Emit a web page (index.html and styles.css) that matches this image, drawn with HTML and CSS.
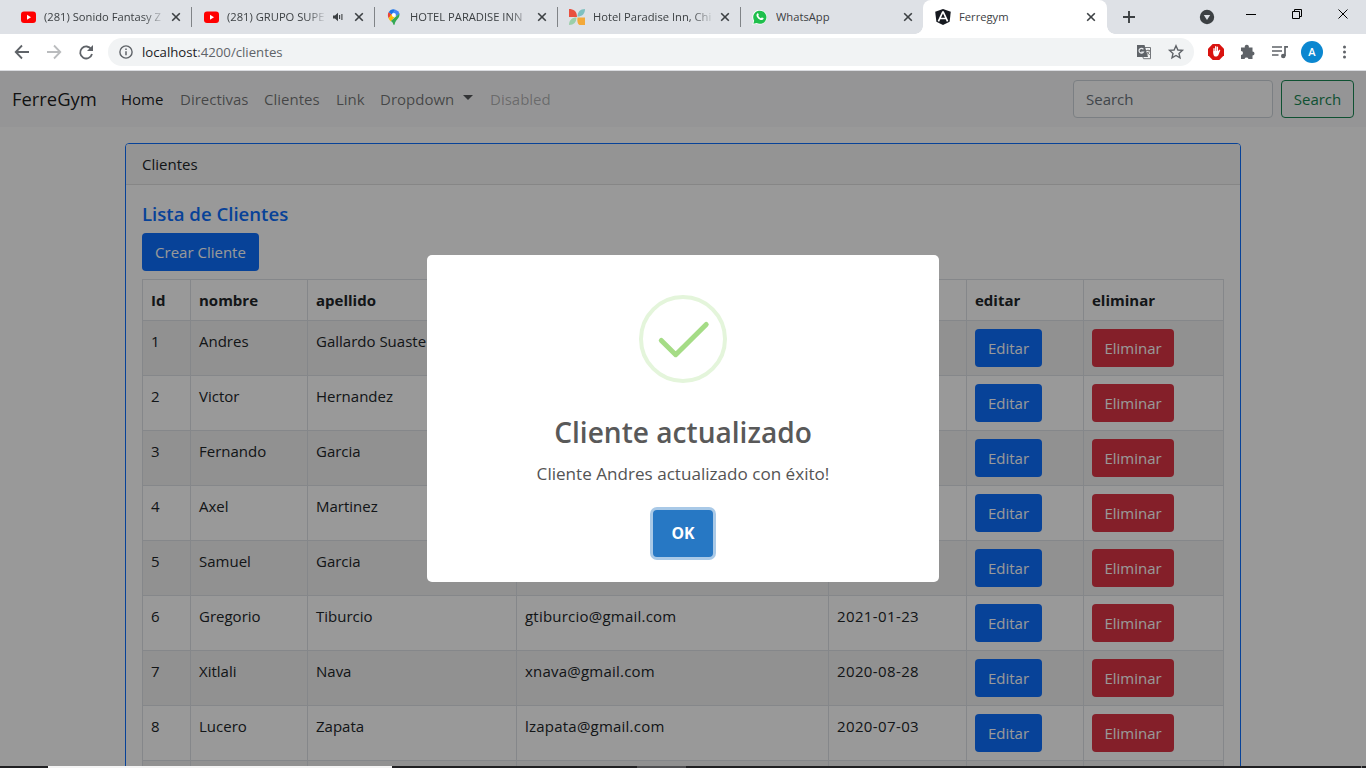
FILE: index.html
```html
<!DOCTYPE html>
<html lang="es">
<head>
<meta charset="utf-8">
<title>Ferregym</title>
<link rel="stylesheet" href="styles.css">
</head>
<body>
<div class="tabs">
  <div class="tab tab-first">
    <svg class="fav" viewBox="0 0 16 16"><rect x="1" y="2.500" width="15" height="11.500" rx="3" fill="#f00"/><path d="M7 5.800v5l4-2.500z" fill="#fff"/></svg>
    <span class="tab-title fade">(281) Sonido Fantasy Z</span>
    <svg class="close" viewBox="0 0 10 10"><path d="M1.200 1.200l7.600 7.600M8.800 1.200L1.200 8.800"/></svg>
  </div>
  <div class="tab">
    <svg class="fav" viewBox="0 0 16 16"><rect x="1" y="2.500" width="15" height="11.500" rx="3" fill="#f00"/><path d="M7 5.800v5l4-2.500z" fill="#fff"/></svg>
    <span class="tab-title fade">(281) GRUPO SUPE</span>
    <svg class="audio" viewBox="0 0 10 10"><path d="M0 3.500h2L5 .8v8.400L2 6.500H0z" fill="#3c4043"/><path d="M6.600 3v4M8.900 2v6" stroke="#3c4043" stroke-width="1.100"/></svg>
    <svg class="close" viewBox="0 0 10 10"><path d="M1.200 1.200l7.600 7.600M8.800 1.200L1.200 8.800"/></svg>
  </div>
  <div class="tab">
    <svg class="fav" viewBox="0 0 16 16">
      <path d="M2.600 3.200A5.600 5.600 0 0 1 9.500.7L5.600 5.400z" fill="#1a73e8"/>
      <path d="M2.600 3.200l3 2.400-3 3.600C1.500 7 1.700 4.500 2.600 3.200z" fill="#ea4335"/>
      <path d="M9.500.7c2 .6 3.500 2.200 4 4.200L9.900 7.200 6.300 4.600z" fill="#4285f4"/>
      <path d="M2.600 9.200l3-3.600 3.900 1.200-4.600 5.800C4 11.300 3 10.400 2.600 9.200z" fill="#fbbc04"/>
      <path d="M13.400 4.500c.7 5-4 6-4.700 10.800-.2.800-1.200.8-1.400 0-.3-1.200-1-2-2.400-3.200z" fill="#34a853"/>
      <circle cx="7.900" cy="6" r="2" fill="#fff"/></svg>
    <span class="tab-title fade-s">HOTEL PARADISE INN</span>
    <svg class="close" viewBox="0 0 10 10"><path d="M1.200 1.200l7.600 7.600M8.800 1.200L1.200 8.800"/></svg>
  </div>
  <div class="tab">
    <svg class="fav" viewBox="0 0 16 16"><path d="M0 0c4.500 0 8 2 8 8-5 0-8-3-8-8z" fill="#e9503f"/><path d="M0 0v8h8z" fill="#e9503f"/><path d="M16 0c0 5-3 7.500-7.500 7.500C8.500 3 11 0 16 0z" fill="#7fc0c0"/><path d="M0 16c0-5 3-7.500 7.500-7.500C7.500 13 5 16 0 16z" fill="#9bcfa9"/><path d="M8.500 8.500H16V16h-5.500c-2-1-2.500-4-2-7.500z" fill="#f3a93a"/></svg>
    <span class="tab-title fade">Hotel Paradise Inn, Chi</span>
    <svg class="close" viewBox="0 0 10 10"><path d="M1.200 1.200l7.600 7.600M8.800 1.200L1.200 8.800"/></svg>
  </div>
  <div class="tab">
    <svg class="fav" viewBox="0 0 16 16"><path d="M.3 15.700l1-3.800A7.300 7.300 0 1 1 4.300 14.700z" fill="#fff"/><path d="M1.400 14.700l.8-3A6.600 6.600 0 1 1 4.600 14z" fill="#1fbf4c"/><path d="M5.200 4.400c.7-.5 1.100-.2 1.400.8.300.8.100.9-.3 1.500.5 1.200 1.400 2 2.600 2.500.6-.6.700-1 1.300-.7 1.600.7 1.600.8 1.200 1.600-.7 1.300-2.400 1.200-4.200.1C5.300 8.800 3.400 6 5.200 4.400z" fill="#fff"/></svg>
    <span class="tab-title">WhatsApp</span>
    <svg class="close" viewBox="0 0 10 10"><path d="M1.200 1.200l7.600 7.600M8.800 1.200L1.200 8.800"/></svg>
  </div>
  <div class="tab tab-active">
    <svg class="fav" viewBox="0 0 16 16"><path d="M8 0l7.800 2.700-1.200 10L8 16 1.400 12.700.2 2.700z" fill="#15181f"/><path d="M8 2.500L3.400 12.400M8 2.500l4.600 9.900M5.200 9.500h5.600" stroke="#fff" stroke-width="1.700" fill="none"/></svg>
    <span class="tab-title">Ferregym</span>
    <svg class="close" viewBox="0 0 10 10"><path d="M1.200 1.200l7.600 7.600M8.800 1.200L1.200 8.800"/></svg>
  </div>
  <svg class="window-controls" viewBox="0 0 260 34">
    <path d="M16 17h12M22 11v12" stroke="#3c4043" stroke-width="1.900"/>
    <circle cx="100" cy="17" r="7.200" fill="#3c4043"/><path d="M96.800 15h6.400L100 20z" fill="#dee1e6"/>
    <g stroke="#000" fill="none"><path d="M139 14.500h10M185.500 11.500h7v7h-7zM187.500 11.500v-2h7v7h-2M231.500 9.500l9 9M240.500 9.500l-9 9"/></g>
  </svg>
</div>
<div class="toolbar">
  <svg class="nav-icons" viewBox="0 0 108 36" fill="none" stroke="#5f6368" stroke-width="1.800">
    <path d="M29 18H16M22 11.500L15.700 18l6.300 6.500"/>
    <path d="M47 18h13M54 11.500l6.300 6.500-6.300 6.500" stroke="#babcbe"/>
    <path d="M91.300 15.300A6 6 0 1 0 92 20" /><path d="M93 11v6h-6z" fill="#5f6368" stroke="none"/>
  </svg>
  <div class="omnibox">
    <svg class="info" viewBox="0 0 14 14"><circle cx="7" cy="7" r="6.100" fill="none" stroke="#5f6368" stroke-width="1.400"/><path d="M7 6.200v4M7 3.600v1.500" stroke="#5f6368" stroke-width="1.500"/></svg>
    <span class="url"><b>localhost</b>:4200/clientes</span>
    <svg class="omni-actions" viewBox="0 0 60 28">
      <path d="M3 7h7.500l3.500 12H3z" fill="#5f6368"/><path d="M11 9.500h5.500v11.200h-7l-.7-2" fill="none" stroke="#74777b"/><path d="M12 12.500h4M14 11.500v1M15.500 12.500c-.5 2-1.500 3.500-3 4.500M13 14l2.700 3" stroke="#777" fill="none" stroke-width=".9"/><path d="M9.400 11.300A2.400 2.400 0 1 0 9.500 14H7.300" fill="none" stroke="#e8eaed" stroke-width="1.200"/>
      <path d="M42 7.800l1.900 4.200 4.500.4-3.400 3 1 4.500-4-2.400-4 2.400 1-4.500-3.400-3 4.500-.4z" fill="none" stroke="#5f6368" stroke-width="1.400"/>
    </svg>
  </div>
  <svg class="ext-icons" viewBox="0 0 172 36">
    <path d="M18.700 10h6.600l4.700 4.700v6.600L25.300 26h-6.600L14 21.300v-6.600z" fill="#d9130f"/>
    <path d="M20 19v-4.300M21.700 18v-5.300M23.400 18v-4.800" stroke="#fff" stroke-width="1.300" stroke-linecap="round"/><path d="M19.400 17h4.700l1.600-1.500.6.700-2 5c-1.300 2.200-4.900 1.700-4.900-1.200z" fill="#fff"/>
    <path d="M47 13.500h3.800a2.100 2.100 0 1 1 4 0h3.700v4a2 2 0 1 1 0 4v3.500h-4a2.100 2.100 0 0 0-4 0H47v-4a2 2 0 0 0 0-4z" fill="#5f6368"/>
    <path d="M78 13h10M78 17h10M78 21h6.500M91 22v-9.200h3" stroke="#5f6368" stroke-width="1.700" fill="none"/><circle cx="89.300" cy="22" r="2.300" fill="#5f6368"/>
    <circle cx="118" cy="18" r="11" fill="#0b87d0"/><text x="118" y="22" text-anchor="middle" class="avatar">A</text>
    <g fill="#5f6368"><circle cx="150.500" cy="13" r="1.500"/><circle cx="150.500" cy="18" r="1.500"/><circle cx="150.500" cy="23" r="1.500"/></g>
  </svg>
</div>
<div class="viewport">
  <nav class="navbar">
    <span class="brand">FerreGym</span>
    <ul class="menu">
      <li class="home">Home</li><li class="directivas">Directivas</li><li class="clientes">Clientes</li><li class="link">Link</li><li class="dropdown">Dropdown<i class="caret"></i></li><li class="disabled">Disabled</li>
    </ul>
    <div class="search-input">Search</div>
    <div class="search-btn">Search</div>
  </nav>
  <main class="card">
    <div class="card-header">Clientes</div>
    <div class="card-body">
      <h5 class="title">Lista de Clientes</h5>
      <a class="btn create">Crear Cliente</a>
      <table class="table">
        <colgroup><col class="c1"><col class="c2"><col class="c3"><col class="c4"><col class="c5"><col class="c6"><col class="c7"></colgroup>
        <thead><tr><th>Id</th><th>nombre</th><th>apellido</th><th></th><th></th><th>editar</th><th>eliminar</th></tr></thead>
        <tbody>
          <tr><td>1</td><td>Andres</td><td>Gallardo Suaste</td><td></td><td></td><td><a class="btn edit">Editar</a></td><td><a class="btn del">Eliminar</a></td></tr>
          <tr><td>2</td><td>Victor</td><td>Hernandez</td><td></td><td></td><td><a class="btn edit">Editar</a></td><td><a class="btn del">Eliminar</a></td></tr>
          <tr><td>3</td><td>Fernando</td><td>Garcia</td><td></td><td></td><td><a class="btn edit">Editar</a></td><td><a class="btn del">Eliminar</a></td></tr>
          <tr><td>4</td><td>Axel</td><td>Martinez</td><td></td><td></td><td><a class="btn edit">Editar</a></td><td><a class="btn del">Eliminar</a></td></tr>
          <tr><td>5</td><td>Samuel</td><td>Garcia</td><td></td><td></td><td><a class="btn edit">Editar</a></td><td><a class="btn del">Eliminar</a></td></tr>
          <tr><td>6</td><td>Gregorio</td><td>Tiburcio</td><td class="mail">gtiburcio@gmail.com</td><td class="date">2021-01-23</td><td><a class="btn edit">Editar</a></td><td><a class="btn del">Eliminar</a></td></tr>
          <tr><td>7</td><td>Xitlali</td><td>Nava</td><td class="mail">xnava@gmail.com</td><td class="date">2020-08-28</td><td><a class="btn edit">Editar</a></td><td><a class="btn del">Eliminar</a></td></tr>
          <tr><td>8</td><td>Lucero</td><td>Zapata</td><td class="mail">lzapata@gmail.com</td><td class="date">2020-07-03</td><td><a class="btn edit">Editar</a></td><td><a class="btn del">Eliminar</a></td></tr>
          <tr><td></td><td></td><td></td><td></td><td></td><td></td><td></td></tr>
        </tbody>
      </table>
    </div>
  </main>
  <div class="backdrop">
    <div class="modal">
      <svg class="success" viewBox="0 0 88 88"><circle cx="44" cy="44" r="42" fill="none" stroke="#e4f5db" stroke-width="4"/><path d="M22.300 45.500L36.700 59.700 67.200 29.500" fill="none" stroke="#a5dc86" stroke-width="5" stroke-linecap="round" stroke-linejoin="round"/></svg>
      <h2 class="modal-title">Cliente actualizado</h2>
      <p class="modal-text">Cliente Andres actualizado con éxito!</p>
      <button class="ok">OK</button>
    </div>
  </div>
</div>
<div class="taskbar"><i class="task-search"></i><i class="task-app"></i><i class="task-edge"></i></div>
</body>
</html>
```
FILE: styles.css
```css
* { box-sizing: border-box; }
body {
  margin: 0;
  width: 1366px;
  height: 768px;
  overflow: hidden;
  display: flex;
  flex-direction: column;
  font-family: "Open Sans", "Noto Sans", sans-serif;
  font-size: 15px;
  line-height: 24px;
  color: #212529;
  background: #fff;
}
svg { display: block; flex: none; }

/* Browser tabs */
.tabs { flex: none; height: 34px; background: #dee1e6; display: flex; padding-left: 8px; }
.tab {
  width: 183px;
  height: 34px;
  padding: 0 10px 0 12px;
  display: flex;
  align-items: center;
  flex: none;
  background: linear-gradient(#808387, #808387) left 7px / 1px 20px no-repeat;
}
.tab-first, .tab-active { background-image: none; }
.tab-active { position: relative; background-color: #fff; border-radius: 8px 8px 0 0; width: 184px; padding-right: 11px; }
/* Curved feet of the selected tab */
.tab-active::before, .tab-active::after {
  content: "";
  position: absolute;
  bottom: 0;
  width: 8px;
  height: 8px;
}
.tab-active::before { left: -8px; background: radial-gradient(circle at 0 0, transparent 7.500px, #fff 8px); }
.tab-active::after { right: -8px; background: radial-gradient(circle at 100% 0, transparent 7.500px, #fff 8px); }
.fav { width: 16px; height: 16px; margin-right: 8px; }
.tab-title {
  flex: 1;
  min-width: 0;
  overflow: hidden;
  white-space: nowrap;
  font-size: 11.2px;
  line-height: 20px;
  color: #3c4043;
}
.fade { -webkit-mask-image: linear-gradient(90deg, #000 82%, transparent 102%); mask-image: linear-gradient(90deg, #000 82%, transparent 102%); }
.fade-s { -webkit-mask-image: linear-gradient(90deg, #000 82%, transparent 102%); mask-image: linear-gradient(90deg, #000 82%, transparent 102%); }
.close { width: 10px; height: 10px; margin-left: 7px; stroke: #3c4043; stroke-width: 1.6; }
.audio { width: 10px; height: 10px; margin: 0 4px 0 8px; }
.window-controls { width: 260px; height: 34px; }

/* Address bar */
.toolbar { flex: none; height: 37px; display: flex; border-bottom: 1px solid #dadce0; }
.nav-icons { width: 108px; height: 36px; }
.omnibox {
  width: 1086px;
  height: 28px;
  margin-top: 4px;
  border-radius: 14px;
  background: #f1f3f4;
  display: flex;
  align-items: center;
  padding-left: 11px;
}
.info { width: 14px; height: 14px; margin-right: 9px; }
.url { flex: 1; font-size: 13.2px; line-height: 24px; color: #5f6368; }
.url b { font-weight: 400; color: #202124; }
.omni-actions { width: 60px; height: 28px; }
.ext-icons { width: 172px; height: 36px; }
.avatar { fill: #fff; font-size: 11px; font-weight: 600; }

/* Page */
.viewport { flex: none; height: 695px; position: relative; overflow: hidden; }
.navbar { height: 56px; background: #f8f9fa; padding: 0 12px; display: flex; align-items: center; }
.brand { width: 101px; font-size: 18.4px; line-height: 30px; color: rgba(0,0,0,.9); }
.menu { list-style: none; margin: 0; padding: 0; display: flex; flex: 1; color: rgba(0,0,0,.55); }
.menu li { padding: 8px; white-space: nowrap; }
.menu .home { width: 59px; color: rgba(0,0,0,.9); }
.directivas { width: 84px; }
.clientes { width: 72px; }
.link { width: 44px; }
.dropdown { width: 110px; display: flex; align-items: center; justify-content: space-between; }
.caret { border: 5px solid transparent; border-top-color: #55585a; border-bottom: 0; margin: -3px 1px 0 0; }
.menu .disabled { color: rgba(0,0,0,.3); }
.search-input {
  width: 200px;
  height: 38px;
  margin-right: 8px;
  padding: 6px 12px;
  border: 1px solid #ced4da;
  border-radius: 4px;
  background: #fff;
  color: #6c757d;
}
.search-btn { width: 73px; height: 38px; border: 1px solid #198754; border-radius: 4px; color: #198754; padding: 6px 0; text-align: center; }
.card { width: 1116px; height: 800px; margin: 16px auto 0; border: 1px solid #0d6efd; border-radius: 4px; }
.card-header { height: 41px; padding: 8px 16px; background: #f7f7f7; border-bottom: 1px solid #dfdfdf; border-radius: 3px 3px 0 0; }
.card-body { padding: 16px; }
.title { margin: 0 0 8px; padding-top: 1px; height: 24px; font-size: 18.6px; line-height: 24px; font-weight: 600; color: #0d6efd; }
.btn { display: block; height: 38px; padding: 7px 0; border-radius: 4px; color: #fff; text-align: center; }
.create { width: 117px; background: #0d6efd; margin-bottom: 8px; }
.edit { width: 67px; background: #0d6efd; }
.del { width: 82px; background: #dc3545; }
.table { width: 1081px; table-layout: fixed; border-collapse: collapse; }
.c1 { width: 48px; }
.c2 { width: 117px; }
.c3 { width: 209px; }
.c4 { width: 312px; }
.c5 { width: 138px; }
.c6 { width: 117px; }
.c7 { width: 140px; }
.table th, .table td { border: 1px solid #dee2e6; padding: 8px; text-align: left; vertical-align: top; white-space: nowrap; }
.table th { height: 41px; font-weight: 700; }
.table td { height: 55px; }
.table .mail { letter-spacing: .22px; }
.table .date { letter-spacing: .38px; }
.table tbody tr:nth-child(odd) { background: #f2f2f2; }

/* Alert dialog */
.backdrop {
  position: absolute;
  inset: 0;
  background: rgba(0,0,0,.4);
  display: flex;
  align-items: center;
  justify-content: center;
}
.modal {
  width: 512px;
  height: 327px;
  background: #fff;
  border-radius: 5px;
  padding-top: 40px;
  display: flex;
  flex-direction: column;
  align-items: center;
}
.success { width: 88px; height: 88px; }
.modal-title { margin: 29px 0 0; font-size: 28.1px; line-height: 40px; font-weight: 600; color: #595959; }
.modal-text { margin: 12px 0 0; font-size: 17.1px; line-height: 20px; color: #545454; }
.ok {
  width: 60px;
  height: 47px;
  margin-top: 26px;
  padding: 0 0 2px;
  border: 0;
  border-radius: 4px;
  background: #2778c4;
  box-shadow: 0 0 0 3px #a9c9e7;
  color: #fff;
  font: 700 15.8px/24px "Open Sans", sans-serif;
}

/* Top edge of the taskbar */
.taskbar { flex: none; height: 2px; background: #202022; display: flex; }
.task-search { width: 344px; margin-left: 48px; background: #f4f4f4; }
.task-app { width: 49px; margin-left: 245px; background: #505052; }
.task-edge { width: 1px; margin-left: 675px; background: #777; }
```
